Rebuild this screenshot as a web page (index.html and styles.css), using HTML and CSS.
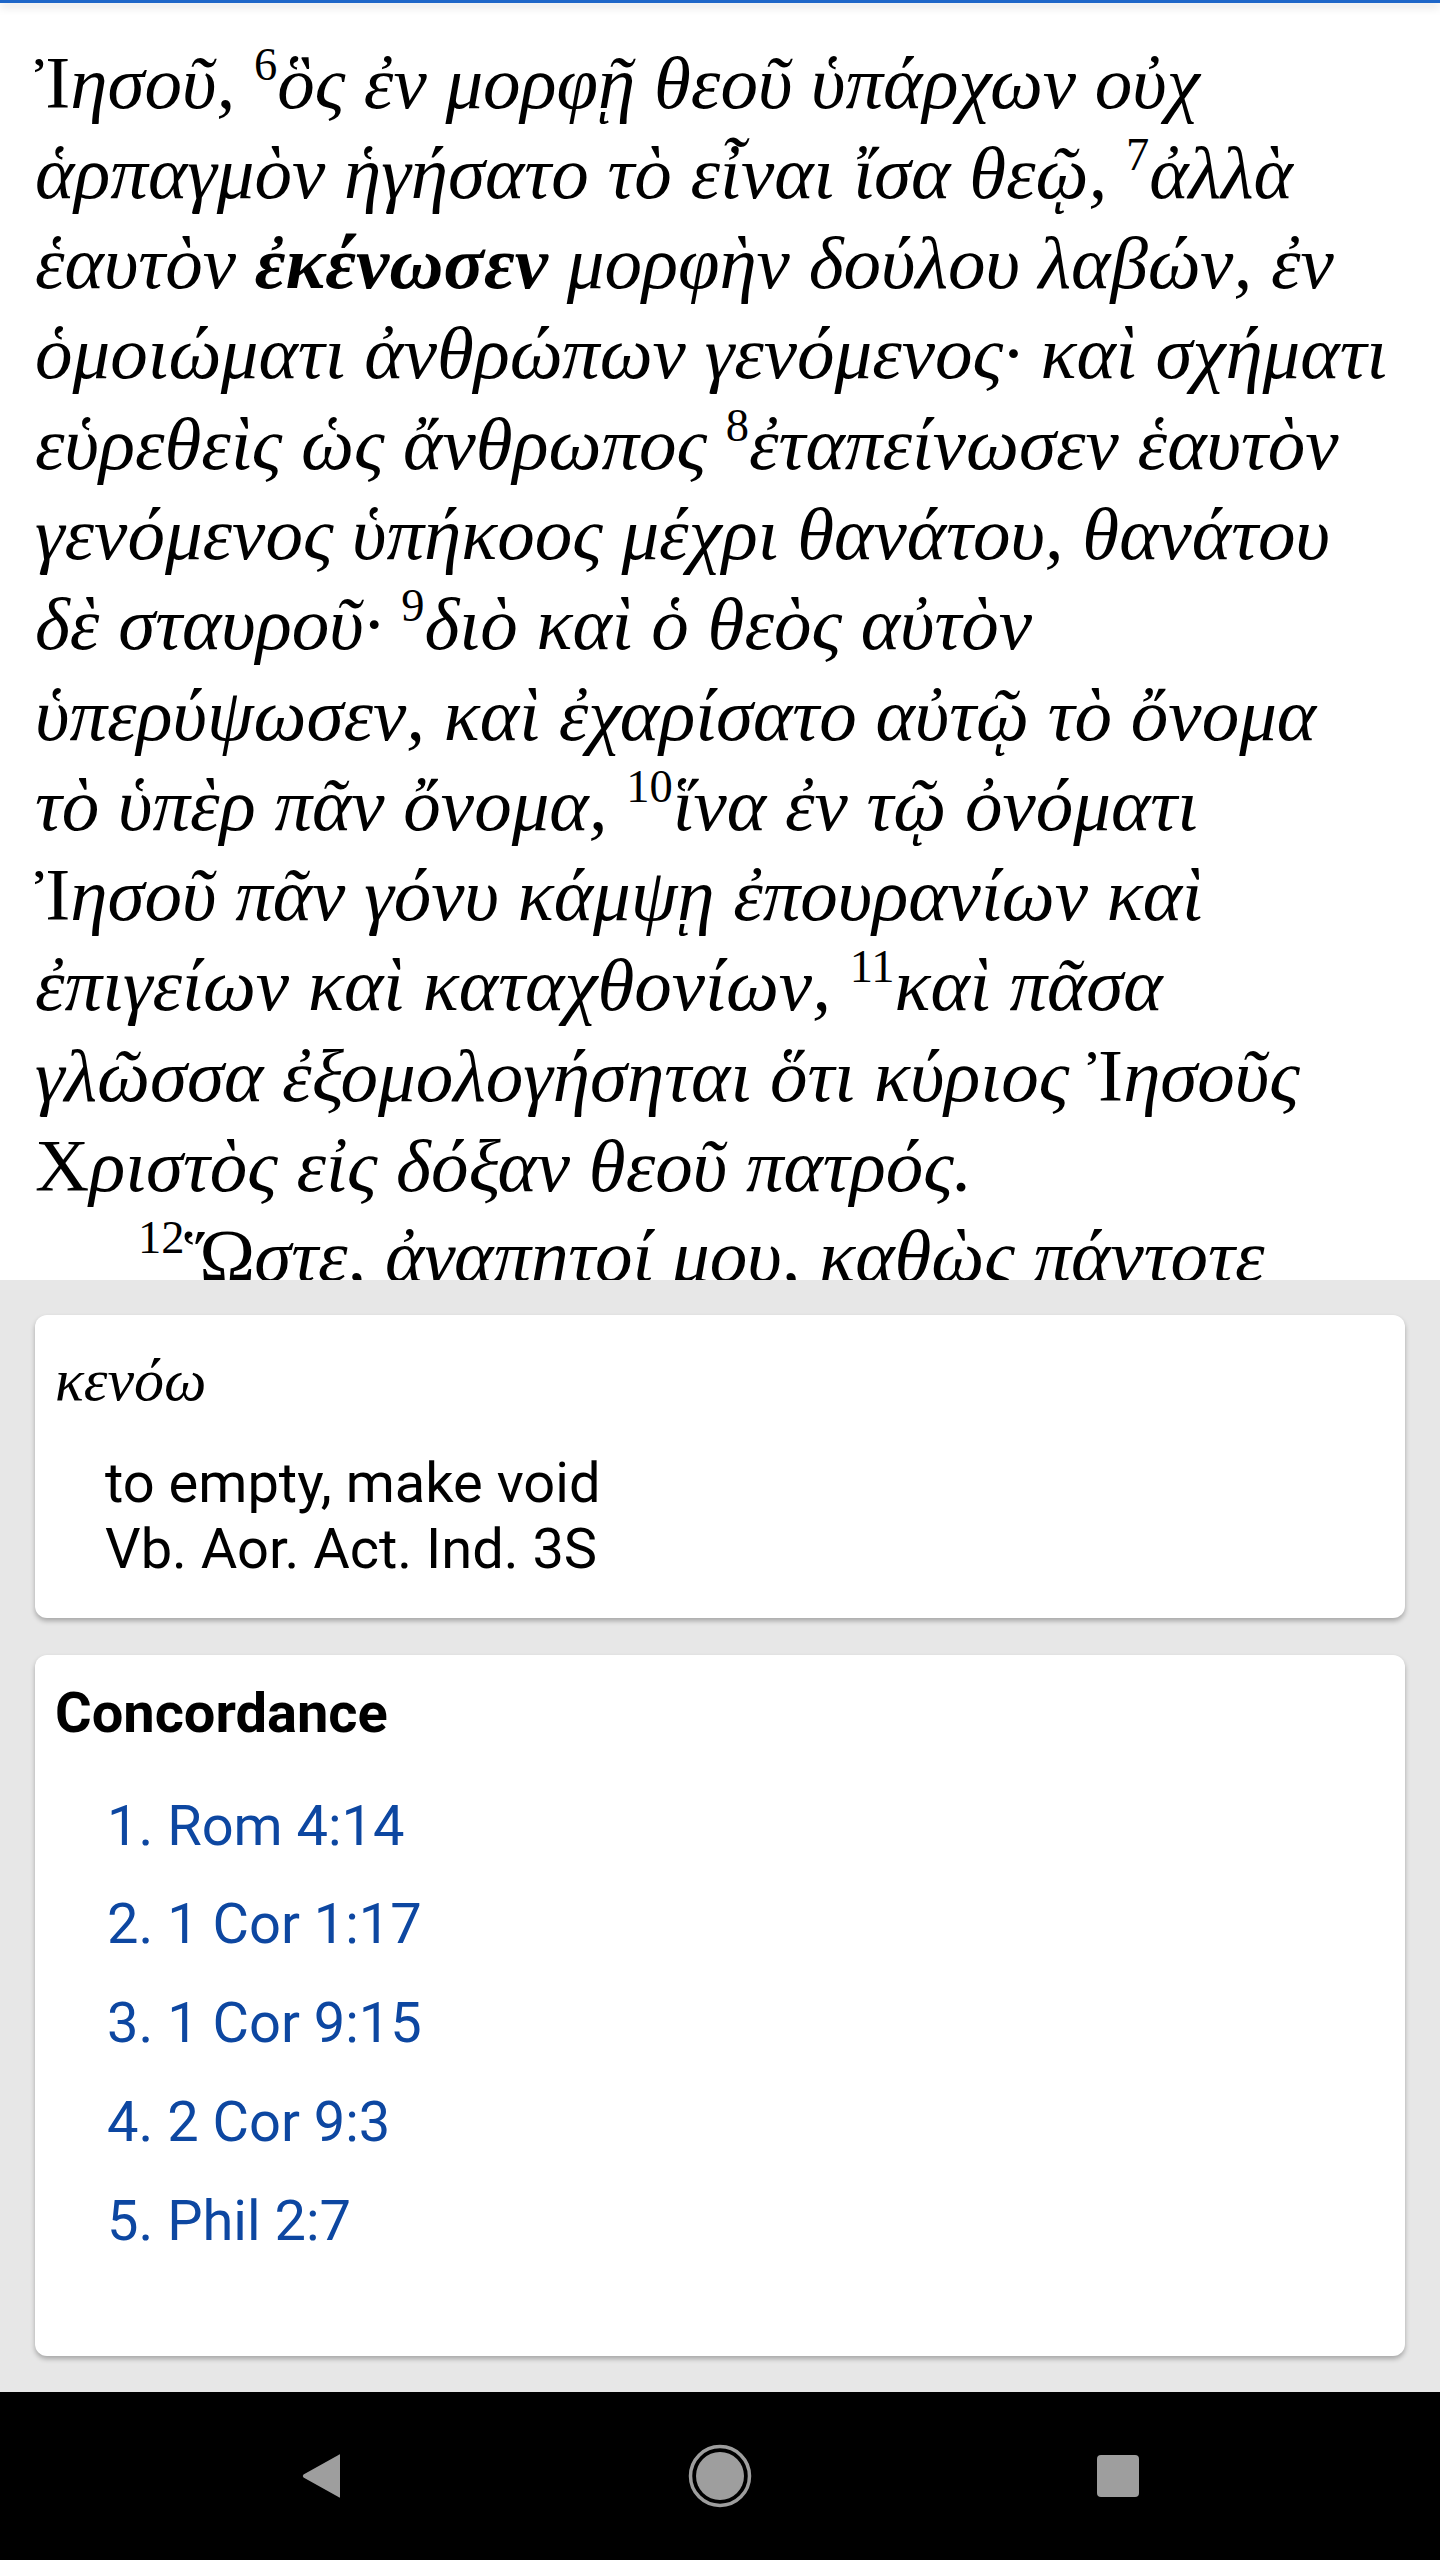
FILE: index.html
```html
<!DOCTYPE html>
<html lang="grc">
<head>
<meta charset="utf-8">
<title>Philippians 2</title>
<link rel="stylesheet" href="styles.css">
</head>
<body>
<div class="screen">
  <div class="appbar-edge"></div>
  <main class="reader">
    <p class="para">
      <span class="ln"><span class="up">Ἰ</span>ησοῦ, <span class="vn">6</span>ὃς ἐν μορφῇ θεοῦ ὑπάρχων οὐχ</span>
      <span class="ln">ἁρπαγμὸν ἡγήσατο τὸ εἶναι ἴσα θεῷ, <span class="vn">7</span>ἀλλὰ</span>
      <span class="ln">ἑαυτὸν <b class="hl">ἐκένωσεν</b> μορφὴν δούλου λαβών, ἐν</span>
      <span class="ln">ὁμοιώματι ἀνθρώπων γενόμενος· καὶ σχήματι</span>
      <span class="ln">εὑρεθεὶς ὡς ἄνθρωπος <span class="vn">8</span>ἐταπείνωσεν ἑαυτὸν</span>
      <span class="ln">γενόμενος ὑπήκοος μέχρι θανάτου, θανάτου</span>
      <span class="ln">δὲ σταυροῦ· <span class="vn">9</span>διὸ καὶ ὁ θεὸς αὐτὸν</span>
      <span class="ln">ὑπερύψωσεν, καὶ ἐχαρίσατο αὐτῷ τὸ ὄνομα</span>
      <span class="ln">τὸ ὑπὲρ πᾶν ὄνομα, <span class="vn">10</span>ἵνα ἐν τῷ ὀνόματι</span>
      <span class="ln"><span class="up">Ἰ</span>ησοῦ πᾶν γόνυ κάμψῃ ἐπουρανίων καὶ</span>
      <span class="ln">ἐπιγείων καὶ καταχθονίων, <span class="vn">11</span>καὶ πᾶσα</span>
      <span class="ln">γλῶσσα ἐξομολογήσηται ὅτι κύριος <span class="up">Ἰ</span>ησοῦς</span>
      <span class="ln"><span class="up">Χ</span>ριστὸς εἰς δόξαν θεοῦ πατρός.</span>
    </p>
    <p class="para indent">
      <span class="ln"><span class="vn">12</span><span class="up">Ὥ</span>στε, ἀγαπητοί μου, καθὼς πάντοτε</span>
    </p>
  </main>
  <section class="panel">
    <div class="card word-card">
      <div class="lemma">κενόω</div>
      <div class="gloss">
        <div>to empty, make void</div>
        <div>Vb. Aor. Act. Ind. 3S</div>
      </div>
    </div>
    <div class="card conc-card">
      <div class="conc-title">Concordance</div>
      <ol class="conc-list">
        <li>1. Rom 4:14</li>
        <li>2. 1 Cor 1:17</li>
        <li>3. 1 Cor 9:15</li>
        <li>4. 2 Cor 9:3</li>
        <li>5. Phil 2:7</li>
      </ol>
    </div>
  </section>
  <nav class="navbar">
    <div class="nav-btn">
      <svg width="44" height="48" viewBox="0 0 44 48"><path d="M40 3.5 L40 44.5 Q40 46.5 38.5 45 L3.5 25.5 Q2 24 3.5 22.5 L38.5 3 Q40 1.5 40 3.5 Z" fill="#9e9e9e"/></svg>
    </div>
    <div class="nav-btn">
      <svg width="66" height="66" viewBox="0 0 66 66"><circle cx="33" cy="33" r="29.5" fill="none" stroke="#9e9e9e" stroke-width="3.5"/><circle cx="33" cy="33" r="24" fill="#9e9e9e"/></svg>
    </div>
    <div class="nav-btn">
      <svg width="44" height="44" viewBox="0 0 44 44"><rect x="1" y="1" width="42" height="42" rx="4" fill="#9e9e9e"/></svg>
    </div>
  </nav>
</div>
</body>
</html>
```
FILE: styles.css
```css
html, body {
  margin: 0;
  padding: 0;
  background: #fff;
}

.screen {
  width: 1440px;
  height: 2560px;
  display: flex;
  flex-direction: column;
  overflow: hidden;
}

.appbar-edge {
  height: 3px;
  flex: 0 0 3px;
  background: #1e66c8;
  box-shadow: 0 3px 10px rgba(0, 0, 0, 0.22);
  position: relative;
  z-index: 2;
}

.reader {
  flex: 0 0 1277px;
  height: 1277px;
  overflow: hidden;
  padding: 34.5px 35px 0;
  box-sizing: border-box;
  font-family: "Liberation Serif", "DejaVu Serif", serif;
  font-style: italic;
  font-size: 75px;
  line-height: 90.3px;
  color: #000;
}

.para {
  margin: 0;
}

.ln {
  display: block;
  white-space: nowrap;
}

.indent .ln:first-child {
  padding-left: 103px;
}

.up {
  font-style: normal;
}

.vn {
  font-style: normal;
  font-size: 0.62em;
  line-height: 0;
  vertical-align: 0.6em;
}

.hl {
  font-weight: bold;
}

.panel {
  flex: 0 0 1112px;
  height: 1112px;
  box-sizing: border-box;
  background: #e7e7e7;
  padding: 35px 35px 36px;
  display: flex;
  flex-direction: column;
  gap: 37px;
}

.card {
  background: #fff;
  border-radius: 12px;
  box-shadow: 0 3px 5px rgba(0, 0, 0, 0.28);
  box-sizing: border-box;
}

.word-card {
  height: 303px;
  padding: 32px 20px 0;
}

.lemma {
  font-family: "Liberation Serif", "DejaVu Serif", serif;
  font-style: italic;
  font-size: 60px;
  line-height: 66px;
}

.gloss {
  margin-top: 38px;
  padding-left: 50px;
  font-family: Roboto, "Liberation Sans", sans-serif;
  font-size: 56px;
  line-height: 65.6px;
  color: #000;
}

.conc-card {
  height: 701px;
  padding: 26px 20px 0;
  font-family: Roboto, "Liberation Sans", sans-serif;
}

.conc-title {
  font-size: 56px;
  font-weight: bold;
  line-height: 65.6px;
  color: #000;
}

.conc-list {
  list-style: none;
  margin: 30px 0 0;
  padding: 0 0 0 52px;
}

.conc-list li {
  font-size: 56px;
  line-height: 98.75px;
  color: #0d47a1;
}

.navbar {
  flex: 0 0 168px;
  height: 168px;
  background: #000;
  display: flex;
  justify-content: center;
  align-items: center;
  gap: 230px;
}

.nav-btn {
  width: 168px;
  height: 168px;
  display: flex;
  align-items: center;
  justify-content: center;
}
```
